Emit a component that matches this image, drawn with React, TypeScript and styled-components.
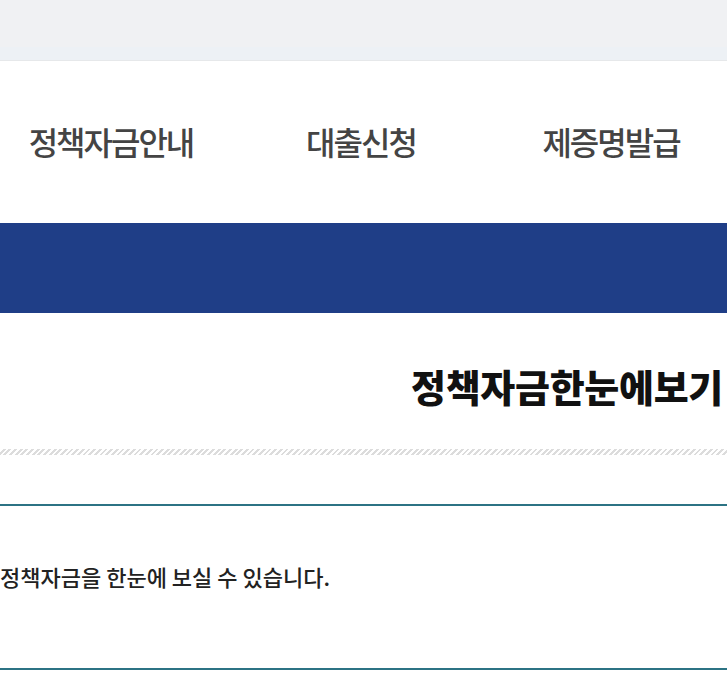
import React from 'react'
import styled, { createGlobalStyle } from 'styled-components'

const GlobalStyle = createGlobalStyle`
  html, body {
    margin: 0;
    padding: 0;
    background: #ffffff;
    overflow: hidden;
  }
  body {
    font-family: 'Noto Sans CJK KR', 'Noto Sans', sans-serif;
  }
`

const Page = styled.div`
  width: 727px;
  height: 682px;
  overflow: hidden;
`

const TopBar = styled.div`
  height: 61px;
  background: linear-gradient(to bottom, #f0f1f3 0, #f0f1f3 47px, #edf1f5 47px, #edf1f5 60px, #e6e8ea 60px);
`

const Nav = styled.nav`
  height: 162px;
  display: flex;
  align-items: center;
  margin-left: -14px;
`

const NavItem = styled.a`
  flex: 0 0 250px;
  text-align: center;
  font-size: 32px;
  font-weight: 500;
  letter-spacing: -2px;
  color: #444444;
  text-decoration: none;
  line-height: 1;
  padding-bottom: 2px;
`

const Band = styled.div`
  height: 90px;
  background: #1f3e87;
`

const TitleArea = styled.div`
  height: 136px;
  display: flex;
  align-items: center;
  justify-content: flex-end;
  padding-right: 4px;
`

const Title = styled.h2`
  margin: 0;
  font-size: 38px;
  font-weight: 900;
  letter-spacing: -0.3px;
  color: #111111;
  line-height: 1;
  padding-top: 10px;
`

const Hatch = styled.div`
  height: 6px;
  background: repeating-linear-gradient(
    -45deg,
    #ffffff 0,
    #ffffff 2px,
    #dcdcdc 2px,
    #dcdcdc 4px
  );
`

const Section = styled.section`
  margin-top: 49px;
  border-top: 2px solid #2c7384;
  border-bottom: 2px solid #2c7384;
  height: 166px;
  display: flex;
  align-items: center;
  padding-bottom: 22px;
  box-sizing: border-box;
`

const Lead = styled.p`
  margin: 0;
  font-size: 22px;
  font-weight: 500;
  letter-spacing: 0;
  color: #222222;
  line-height: 1;
`

export default function App() {
  return (
    <Page>
      <GlobalStyle />
      <TopBar />
      <Nav>
        <NavItem>정책자금안내</NavItem>
        <NavItem>대출신청</NavItem>
        <NavItem>제증명발급</NavItem>
      </Nav>
      <Band />
      <TitleArea>
        <Title>정책자금한눈에보기</Title>
      </TitleArea>
      <Hatch />
      <Section>
        <Lead>정책자금을 한눈에 보실 수 있습니다.</Lead>
      </Section>
    </Page>
  )
}
